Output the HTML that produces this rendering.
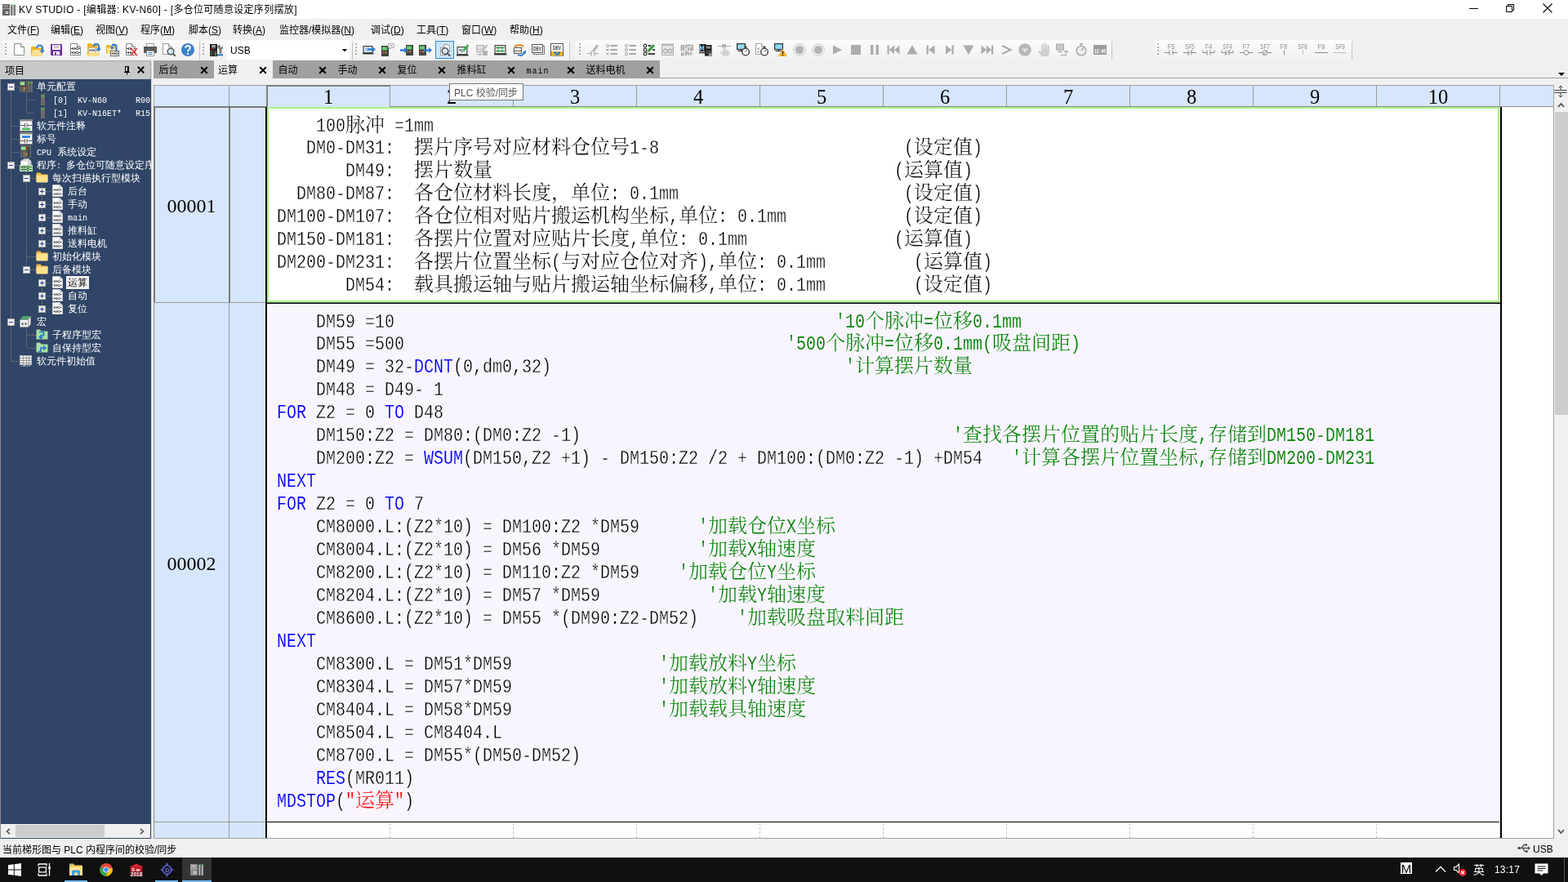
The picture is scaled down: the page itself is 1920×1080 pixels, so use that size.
<!DOCTYPE html>
<html lang="zh-CN"><head><meta charset="utf-8"><title>KV STUDIO</title>
<style>
*{box-sizing:border-box;margin:0;padding:0}
html,body{width:1920px;height:1080px;overflow:hidden;background:#f0f0f0}
body{position:relative;font-family:"Liberation Sans","Noto Sans CJK SC",sans-serif;font-size:12px;color:#000}
.abs,.abs>*{position:absolute}
#root{position:absolute;left:0;top:0;width:1920px;height:1080px;overflow:hidden;will-change:transform}
#root div,#root span.p,#root svg{position:absolute}
/* title */
#title{left:0;top:0;width:1920px;height:23px;background:#fff}
#title .t{left:23px;top:3px;height:18px;line-height:18px;font-size:12px;white-space:pre;letter-spacing:.32px}
/* menu */
#menu{left:0;top:23px;width:1920px;height:24px;background:#f0f0f0}
#menu .m{top:5px;height:18px;line-height:18px;font-size:12px;white-space:pre}
/* toolbar */
#tb{left:0;top:47px;width:1920px;height:28px;background:#f0f0f0}
.tg{top:2px;height:24px;border-radius:3px;background:linear-gradient(#fbfbfb,#f1f1f1)}
.grip{top:4px;width:2px;height:16px;background:repeating-linear-gradient(#b0b0b0 0 2px,transparent 2px 4px)}
/* left panel */
#lp-h{left:0;top:74px;width:185px;height:23px;background:#c8c8c8;border-top:1px solid #aaa;border-right:1px solid #a4a4a4}
#lp{left:0;top:97px;width:185px;height:930px;background:#304567;border-left:1px solid #8a8a8a}
#lp .r{left:0;height:16px;line-height:16px;color:#fff;font-family:"Liberation Mono","WenQuanYi Zen Hei","Noto Sans CJK SC",sans-serif;font-size:12px;white-space:pre}
#lp .r b{font-weight:normal;font-size:10px;letter-spacing:0}
/* tabs */
.tab{top:74px;height:22px;background:#a0a0a0;line-height:25px;font-size:12px;padding-left:6.500px;white-space:pre}
.tab.on{background:#f0f0f0;top:75px;height:22px;line-height:23px;padding-left:5px}
.tx{top:81px;width:9px;height:9px}
/* grid */
#hdr{left:188px;top:104px;width:1715px;height:27px;background:#d6e6fd;border:1px solid #a0a0a0;border-bottom:1px solid #8c8c8c}
.hc{top:105px;height:25px;border-left:1px solid #9a9a9a;text-align:center;font:24.5px/27px "Liberation Serif",serif}
#rowh{left:188px;top:131px;width:138px;height:896px;background:#d6e6fd;border-left:1px solid #8c8c8c;border-bottom:1px solid #a0a0a0}
.rn{left:189px;width:91px;text-align:center;font:24px/28px "Liberation Serif",serif;height:28px}
/* code */
#b1{left:327px;top:131px;width:1509px;height:239px;background:#fff;border:2px solid #a8f283}
#b2{left:327px;top:372px;width:1509px;height:634px;background:#f9f5ff}
.ln{left:339px;height:28px;line-height:28px;white-space:pre;font-family:"Liberation Mono","Noto Serif CJK SC",serif;font-size:24px;color:#000}
.ln span{position:static;display:inline-block;vertical-align:baseline;line-height:28px;white-space:pre}
.ln .l{font-family:"Liberation Mono",monospace;font-size:24px;transform:scaleX(.8333);transform-origin:0 50%;overflow:visible}
.ln .c{font-family:"Liberation Mono","Noto Serif CJK SC",serif;font-size:24px}
.ln .l{-webkit-text-stroke:0.35px #fbf9ff}
.ln .l.g,.ln .l.k,.ln .l.s{-webkit-text-stroke:0.12px #fbf9ff}
.ln .c{-webkit-text-stroke:0.2px #fbf9ff}
.ln .c.g,.ln .c.s{-webkit-text-stroke:0.15px #fbf9ff}
.ln .k{color:#0000ff}.ln .g{color:#008000}.ln .s{color:#ff0000}
/* status */
#status{left:0;top:1027px;width:1920px;height:23px;background:#f0f0f0}
/* taskbar */
#task{left:0;top:1050px;width:1920px;height:30px;background:#101010}
</style></head><body><div id="root">

<div id="title"><span class="p t">KV STUDIO - [编辑器: KV-N60] - [多仓位可随意设定序列摆放]</span>
<svg style="left:3px;top:5px" width="16" height="14" viewBox="0 0 16 14" ><rect x="0" y="0" width="9" height="14" fill="#666"/><rect x="1" y="1" width="6" height="3" fill="#8a8a8a"/><path d="M0 5.500H9" stroke="#bbb" stroke-width=".8"/><rect x="4" y="9" width="3" height="3" fill="#e4e4e4"/><rect x="5" y="10" width="1" height="1" fill="#444"/><rect x="10" y="1" width="2.500" height="13" fill="#777"/><rect x="13.500" y="1" width="2.500" height="13" fill="#777"/><rect x="11.500" y="0" width="1.200" height="1.200" fill="#2f6"/><rect x="14.500" y="0" width="1.200" height="1.200" fill="#2f6"/></svg>
<svg style="left:1799px;top:10px" width="11" height="1" viewBox="0 0 11 1" ><rect width="11" height="1" fill="#000"/></svg>
<svg style="left:1843px;top:4px" width="12" height="12" viewBox="0 0 12 12" ><path d="M1.500 3.500H8.500V10.500H1.500ZM3.500 3.500V1.500H10.500V8.500H8.500" fill="none" stroke="#000" stroke-width="1"/></svg>
<svg style="left:1889px;top:4px" width="12" height="12" viewBox="0 0 12 12" ><path d="M0.500 0.500L11.500 11.500M11.500 0.500L0.500 11.500" stroke="#000" stroke-width="1.100"/></svg>
</div>

<div id="menu">
<span class="p m" style="left:9px">文件(<u>F</u>)</span>
<span class="p m" style="left:62px">编辑(<u>E</u>)</span>
<span class="p m" style="left:117px">视图(<u>V</u>)</span>
<span class="p m" style="left:172px">程序(<u>M</u>)</span>
<span class="p m" style="left:231px">脚本(<u>S</u>)</span>
<span class="p m" style="left:285px">转换(<u>A</u>)</span>
<span class="p m" style="left:342px">监控器/模拟器(<u>N</u>)</span>
<span class="p m" style="left:454px">调试(<u>D</u>)</span>
<span class="p m" style="left:510px">工具(<u>T</u>)</span>
<span class="p m" style="left:565px">窗口(<u>W</u>)</span>
<span class="p m" style="left:624px">帮助(<u>H</u>)</span>
</div>

<div id="tb">
<div class="tg" style="left:3px;width:241px"></div>
<div class="tg" style="left:246px;width:185px"></div>
<div class="tg" style="left:433px;width:264px"></div>
<div class="tg" style="left:704px;width:657px"></div>
<div class="tg" style="left:1414px;width:241px"></div>
<div style="left:244px;top:4px;width:1px;height:22px;background:#c4c4c4"></div>
<div style="left:431px;top:4px;width:1px;height:22px;background:#c4c4c4"></div>
<div style="left:697px;top:4px;width:1px;height:22px;background:#c4c4c4"></div>
<div style="left:1361px;top:4px;width:1px;height:22px;background:#c4c4c4"></div>
<div style="left:1655px;top:4px;width:1px;height:22px;background:#c4c4c4"></div>
<div class="grip" style="left:6px;top:6px"></div>
<div class="grip" style="left:248px;top:6px"></div>
<div class="grip" style="left:435px;top:6px"></div>
<div class="grip" style="left:709px;top:6px"></div>
<div class="grip" style="left:1417px;top:6px"></div>
<svg style="left:15px;top:6px" width="16" height="16" viewBox="0 0 16 16" ><path d="M2.5 0.5H10.5L14.5 4.5V14.5H2.5Z" fill="#fff" stroke="#8a8a8a"/><path d="M10.5 0.5V4.5H14.5" fill="#e8e8e8" stroke="#8a8a8a"/></svg>
<svg style="left:38px;top:6px" width="16" height="16" viewBox="0 0 16 16" ><path d="M0 5Q0 4 1 4H5L6.5 6H13V16H0Z" fill="#f0b323"/><path d="M2 8H16L13.5 16H0Z" fill="#ffdf90"/><path d="M7 6A3.5 3.5 0 0 1 14 6V9" stroke="#2f7cd0" stroke-width="2.2" fill="none"/><path d="M10.5 8.5H16.5L13.5 12.5Z" fill="#2f7cd0"/></svg>
<svg style="left:61px;top:6px" width="16" height="16" viewBox="0 0 16 16" ><path d="M1 1H15V15H2L1 14Z" fill="#7030a0"/><rect x="3" y="2" width="10" height="6" fill="#fff"/><path d="M5 3.500H11M5 5.500H11" stroke="#a0a0a0"/><rect x="4" y="10" width="8" height="4.300" fill="#fff"/><rect x="6" y="11" width="2" height="3.300" fill="#7030a0"/></svg>
<svg style="left:84px;top:6px" width="16" height="16" viewBox="0 0 16 16" ><path d="M2.5 0.5H10.5L14.5 4.5V14.5H2.5Z" fill="#fff" stroke="#8a8a8a"/><path d="M10.5 0.5V4.5H14.5" fill="#e8e8e8" stroke="#8a8a8a"/><path d="M3 6.5H5.5M7.5 6.5H9M12 6.5H14M5.5 5V8M7.5 5V8M3 11.5H5.5M7.5 11.5H9M12 11.5H14M5.5 10V13M7.5 10V13" stroke="#444" fill="none"/><circle cx="10.5" cy="6.5" r="1.4" fill="#fff" stroke="#444"/><circle cx="10.5" cy="11.5" r="1.4" fill="#fff" stroke="#444"/></svg>
<svg style="left:107px;top:6px" width="16" height="16" viewBox="0 0 16 16" ><path d="M0 1Q0 0 1 0H5L6.5 2H12V15H0Z" fill="#f0b323"/><rect x="1.5" y="5.5" width="12" height="6" fill="#fff" stroke="#aaa" stroke-width=".6"/><path d="M2 8.5H4M4 7V10M6 7V10M6 8.5H8M11 8.5H13" stroke="#555"/><circle cx="9.5" cy="8.5" r="1.4" fill="none" stroke="#555"/><path d="M2 11H16L13.5 16H0Z" fill="#ffdf90"/><path d="M7.5 3.5A3.3 3.3 0 0 1 14 3.5V7" stroke="#2f7cd0" stroke-width="2.2" fill="none"/><path d="M11 6H17L14 10Z" fill="#2f7cd0"/></svg>
<svg style="left:130px;top:6px" width="16" height="16" viewBox="0 0 16 16" ><path d="M0 3Q0 2 1 2H4L5.5 3.5H11V13H0Z" fill="#f0b323"/><path d="M1 5H11V13H1Z" fill="#ffdf90"/><path d="M12.5 9V3.5A3 3 0 0 0 7 3.5" stroke="#2f7cd0" stroke-width="2.2" fill="none"/><path d="M4.5 4.5H10.5L7.5 7.8Z" fill="#2f7cd0" transform="rotate(25 7.5 5)"/><rect x="5.5" y="9.5" width="10" height="6" fill="#fff" stroke="#666"/><path d="M6.5 12.5H8M8 11V14M10 11V14M10 12.5H11M14 12.5H15" stroke="#444"/><circle cx="12.5" cy="12.5" r="1.3" fill="none" stroke="#444"/></svg>
<svg style="left:153px;top:6px" width="16" height="16" viewBox="0 0 16 16" ><path d="M1.5 0.5H8.5L12.5 4.5V14.5H1.5Z" fill="#fff" stroke="#8a8a8a"/><path d="M8.5 0.5V4.5H12.5" fill="#e8e8e8" stroke="#8a8a8a"/><path d="M2 6.5H4.5M6.5 6.5H9M4.5 5V8M6.5 5V8M2 11.5H4.5M6.5 11.5H9M4.5 10V13M6.5 10V13M10.5 6.5H12.5" stroke="#444" fill="none"/><path d="M7 6L15 15M15 6L7 15" stroke="#e0323c" stroke-width="1.6"/></svg>
<svg style="left:176px;top:6px" width="16" height="16" viewBox="0 0 16 16" ><rect x="3.5" y="0.5" width="9" height="5" fill="#fff" stroke="#9a9a9a"/><path d="M0 4H16V12H0Z" fill="#5a5a5a"/><rect x="3.5" y="9.5" width="9" height="6" fill="#fff" stroke="#9a9a9a"/><path d="M5.5 11.5H10.5M5.5 13.5H10.5" stroke="#2f7cd0" stroke-width="1.2"/></svg>
<svg style="left:199px;top:6px" width="16" height="16" viewBox="0 0 16 16" ><path d="M0.5 0.5H7.5L11.5 4.5V13.5H0.5Z" fill="#fff" stroke="#9a9a9a"/><path d="M7.5 0.5V4.5H11.5" fill="#e8e8e8" stroke="#9a9a9a"/><circle cx="10" cy="10" r="3.8" fill="#cfeaf8" stroke="#555" stroke-width="1.5"/><path d="M12.8 12.8L15.8 15.8" stroke="#444" stroke-width="1.8"/></svg>
<svg style="left:222px;top:6px" width="16" height="16" viewBox="0 0 16 16" ><circle cx="8" cy="8" r="8" fill="#3b82c8"/><path d="M5.2 5.8Q5.3 3 8 3Q10.8 3 10.8 5.6Q10.8 7 9.2 8Q8 8.8 8 10.3" stroke="#fff" stroke-width="1.9" fill="none"/><rect x="7" y="11.8" width="2" height="2" fill="#fff"/></svg>
<svg style="left:257px;top:6px" width="16" height="16" viewBox="0 0 16 16" ><rect x="0" y="1" width="9" height="15" fill="#111"/><rect x="2" y="2" width="5" height="3.500" fill="#9c9c9c"/><rect x="1" y="6" width="1.600" height="1.600" fill="#f01818"/><rect x="3.500" y="6.300" width="3" height="1" fill="#777"/><rect x="0.500" y="8.500" width="2.500" height="7" fill="#4c4c4c"/><rect x="3.800" y="8.500" width="1.200" height="7" fill="#4c4c4c"/><rect x="5.800" y="8.500" width="2.700" height="7" fill="#4c4c4c"/><rect x="6" y="11.800" width="1.800" height="1.400" fill="#1fd41f"/><rect x="6" y="13.800" width="1.800" height="1.400" fill="#1fd41f"/><path d="M9 4L11.500 1.500L13 3V5L14.500 5L16 3Q17 6 14.500 7.500V12.500H11.500V7.500Q9.500 6.500 9 4Z" fill="#7c7c7c"/><rect x="9" y="13.300" width="7" height="2" fill="#2a72c8"/></svg>
<div style="left:278px;top:3px;width:150px;height:23px;background:#fff"></div>
<span class="p" style="left:282px;top:7px;line-height:17px;font-size:12px">USB</span>
<svg style="left:418.5px;top:12.5px" width="6" height="3.5" viewBox="0 0 6 3.5" ><path d="M0 0H6L3 3.500Z" fill="#000"/></svg>
<svg style="left:444px;top:6px" width="16" height="16" viewBox="0 0 16 16" ><rect x="1.1" y="3.6" width="10.8" height="8" fill="#e8f4fb" stroke="#444" stroke-width="1.2"/><path d="M-0.5 12.6H13.5" stroke="#333" stroke-width="1.6"/><path d="M4 5.5V9.5M6 5.5V9.5" stroke="#3a7ab8" stroke-dasharray="1.5 1"/><path d="M6 6.2H12V4.1L16 7.5L12 10.9V8.8H6Z" fill="#2f7cd0"/></svg>
<svg style="left:467px;top:6px" width="16" height="16" viewBox="0 0 16 16" ><rect x="0" y="3" width="9" height="13" fill="#444"/><rect x="1" y="4.5" width="6" height="4" fill="#62d26c"/><rect x="1.5" y="10.5" width="1.6" height="1.6" fill="#e55"/><rect x="4.5" y="10.5" width="1.6" height="1.6" fill="#fa0"/><path d="M8.5 0.5H15.5V5.5H12L10.5 7.5V5.5H8.5Z" fill="#fff" stroke="#aaa"/><path d="M10 2.5H14M10 4H14" stroke="#999" stroke-width=".7"/></svg>
<svg style="left:490px;top:6px" width="16" height="16" viewBox="0 0 16 16" ><rect x="7" y="2" width="9" height="13" fill="#444"/><rect x="8" y="3.5" width="6" height="4" fill="#62d26c"/><rect x="8.5" y="9.5" width="1.6" height="1.6" fill="#e55"/><rect x="11.5" y="9.5" width="1.6" height="1.6" fill="#fa0"/><path d="M0 7.2H5V5.1L9 8.5L5 11.9V9.8H0Z" fill="#2f7cd0"/></svg>
<svg style="left:513px;top:6px" width="16" height="16" viewBox="0 0 16 16" ><rect x="0" y="2" width="9" height="13" fill="#444"/><rect x="1" y="3.5" width="6" height="4" fill="#62d26c"/><rect x="1.5" y="9.5" width="1.6" height="1.6" fill="#e55"/><rect x="4.5" y="9.5" width="1.6" height="1.6" fill="#fa0"/><path d="M6 7.2H12V5.1L16 8.5L12 11.9V9.8H6Z" fill="#2f7cd0"/></svg>
<div style="left:533px;top:3px;width:23px;height:22px;background:#cce4f7;border:1px solid #2a8ad4"></div>
<svg style="left:536px;top:6px" width="16" height="16" viewBox="0 0 16 16" ><rect x="3.5" y="5.5" width="7" height="9" fill="#fff" stroke="#9a9a9a"/><path d="M7.500 1.500H12L14.500 4V10.500H7.500Z" fill="#fff" stroke="#9a9a9a"/><circle cx="9" cy="9.500" r="3.800" fill="#d6eefa" stroke="#555" stroke-width="1.500"/><path d="M11.800 12.300L15.300 15.800" stroke="#444" stroke-width="1.800"/></svg>
<svg style="left:559px;top:6px" width="16" height="16" viewBox="0 0 16 16" ><rect x="1.1" y="4.6" width="11.8" height="9" fill="#e8f4fb" stroke="#444" stroke-width="1.2"/><path d="M-0.5 14.6H14.5" stroke="#333" stroke-width="1.6"/><path d="M3 8.5H5M5 7V10M7 7V10" stroke="#555"/><path d="M6.5 11L7.5 8L13.5 1L15.500 3L9.500 10Z" fill="#3fae49"/><path d="M6.500 11L7.500 8L9.500 10Z" fill="#f2d6a0"/><path d="M6.3 11.200L7 9.800L7.800 10.700Z" fill="#222"/></svg>
<svg style="left:582px;top:6px" width="16" height="16" viewBox="0 0 16 16" ><rect x="1.5" y="2.500" width="9" height="8" fill="#e0e0e0" stroke="#b0b0b0"/><path d="M2 7.500H5M7 6V9" stroke="#b0b0b0"/><path d="M8 8L14 1.500L15.500 3L10 9.500Z" fill="#b8b8b8"/><rect x="9" y="9" width="6" height="6" fill="#b4b4b4"/><path d="M1 13.500H7M5 11.500L7.500 13.500L5 15.500" stroke="#c0c0c0" stroke-width="1.300" fill="none"/></svg>
<svg style="left:605px;top:6px" width="16" height="16" viewBox="0 0 16 16" ><rect x="1.1" y="2.6" width="12.8" height="10" fill="#fff" stroke="#444" stroke-width="1.2"/><path d="M-0.5 13.6H15.5" stroke="#333" stroke-width="1.6"/><path d="M2.500 5.500H12.500M2.500 9.500H12.500" stroke="#444"/><rect x="4" y="4" width="2.200" height="3" fill="#3fc050"/><rect x="8.500" y="4" width="2.200" height="3" fill="#3fc050"/><rect x="4" y="8" width="2.200" height="3" fill="#3fc050"/><rect x="8.500" y="8" width="2.200" height="3" fill="#3fc050"/></svg>
<svg style="left:628px;top:6px" width="16" height="16" viewBox="0 0 16 16" ><rect x="1.5" y="5.500" width="9" height="7" fill="#fff" stroke="#555"/><path d="M2 9.500H4M4 8V11M6 8V11M6 9.500H7.500M8.500 8V11M8.500 9.500H10" stroke="#555" stroke-width=".8"/><path d="M4 4A5 4 0 0 1 13 4.500" stroke="#f08a24" stroke-width="1.800" fill="none"/><path d="M1.500 2L6 2.500L3 6Z" fill="#f08a24"/><path d="M14 10A5 4.500 0 0 1 6 14" stroke="#2f7cd0" stroke-width="1.800" fill="none"/><path d="M16 8.500L15.500 13L11.500 11Z" fill="#2f7cd0"/></svg>
<svg style="left:651px;top:6px" width="16" height="16" viewBox="0 0 16 16" ><rect x="2.500" y="3.500" width="13" height="10" fill="#fff" stroke="#777"/><rect x="0.5" y="1.500" width="13" height="10" fill="#fff" stroke="#555"/><text x="2" y="9" font-family="Liberation Sans,sans-serif" font-weight="bold" font-size="6.500" fill="#333" textLength="10" lengthAdjust="spacingAndGlyphs">DEV</text></svg>
<svg style="left:674px;top:6px" width="16" height="16" viewBox="0 0 16 16" ><rect x="0.5" y="0.500" width="15" height="14.500" fill="#fff" stroke="#555"/><text x="3" y="8" font-family="Liberation Sans,sans-serif" font-weight="bold" font-size="6.500" fill="#333" textLength="10" lengthAdjust="spacingAndGlyphs">DEV</text><rect x="1" y="10" width="14" height="5" fill="#f2b824"/><path d="M4 11.500H7V13.500H10V11.500H12" stroke="#2f7cd0" stroke-width="2" fill="none"/></svg>
<svg style="left:718px;top:6px" width="16" height="16" viewBox="0 0 16 16" ><path d="M1 12.500H6M10 12.500H15M6 9.5V15.5M10 9.5V15.5" stroke="#a8a8a8" stroke-width="1.200"/><path d="M7 9L12.500 1.500L15 3.500L9.500 10.500Z" fill="#b4b4b4"/><path d="M7 9L9.500 10.500L6.500 11.500Z" fill="#d8d8d8"/></svg>
<svg style="left:741px;top:6px" width="16" height="16" viewBox="0 0 16 16" ><circle cx="3" cy="3" r="1.700" fill="none" stroke="#a8a8a8"/><path d="M6.500 3H15M1 8H4.500M6.500 8H15M6.500 13H15" stroke="#a8a8a8" stroke-width="1.800"/><path d="M1.500 11.500L4.500 14.500M4.500 11.500L1.500 14.500" stroke="#a8a8a8"/></svg>
<svg style="left:764px;top:6px" width="16" height="16" viewBox="0 0 16 16" ><circle cx="3" cy="3" r="1.700" fill="none" stroke="#a8a8a8"/><circle cx="3" cy="8" r="1.700" fill="none" stroke="#a8a8a8"/><circle cx="3" cy="13" r="1.700" fill="none" stroke="#a8a8a8"/><path d="M6.500 3H15M6.500 8H15M6.500 13H15" stroke="#a8a8a8" stroke-width="1.800"/></svg>
<svg style="left:787px;top:6px" width="16" height="16" viewBox="0 0 16 16" ><circle cx="3" cy="3" r="1.800" fill="none" stroke="#333" stroke-width="1.200"/><circle cx="3" cy="8" r="1.800" fill="none" stroke="#333" stroke-width="1.200"/><circle cx="3" cy="13" r="1.800" fill="none" stroke="#333" stroke-width="1.200"/><path d="M6.500 3H10M12 8H15M6.500 13H15" stroke="#444" stroke-width="1.800"/><path d="M4.500 11.500L5.500 9L12.500 1L15 3L8 10.800Z" fill="#2fa23a"/><path d="M4.500 11.500L5.500 9L8 10.800Z" fill="#f0c090"/><path d="M4.300 11.700L5 10.300L5.800 11.200Z" fill="#222"/></svg>
<svg style="left:810px;top:6px" width="16" height="16" viewBox="0 0 16 16" ><rect x="0.5" y="1" width="14" height="13.500" fill="#e6e6e6" stroke="#b0b0b0"/><rect x="0.5" y="1" width="14" height="2" fill="#b8b8b8"/><circle cx="4.500" cy="9.500" r="2.300" fill="none" stroke="#a8a8a8" stroke-width="1.200"/><circle cx="10.500" cy="9.500" r="2.300" fill="none" stroke="#a8a8a8" stroke-width="1.200"/><path d="M6.800 9.200Q7.500 8.500 8.200 9.200M2.500 8.500L5 6.500M12.500 8L15.500 5.500" stroke="#a8a8a8" fill="none"/></svg>
<svg style="left:833px;top:6px" width="16" height="16" viewBox="0 0 16 16" ><rect x="0.500" y="1.500" width="15" height="13" fill="#e4e4e4"/><path d="M1.500 2V9M4 2V9M1 12.500H4.500M1 14.500H4.500M7 2.500H13.500M7 2.500V6M10 5V9M13 5V9M7 9V14M7 11.500H10M10 11.500V14.500M13 11V14.500M6.500 14.500H8M15 2V9" stroke="#a4a4a4" stroke-width="1.700" fill="none"/></svg>
<svg style="left:856px;top:6px" width="16" height="16" viewBox="0 0 16 16" ><rect x="0.5" y="1" width="8" height="9" fill="#1d2c3c"/><path d="M1.500 9V3L3.500 7L5.500 3V9" stroke="#7fc8f0" stroke-width="1.100" fill="none"/><path d="M0 11.500H9" stroke="#222" stroke-width="1.400"/><rect x="7" y="2" width="8.500" height="13.500" fill="#1a1a1a"/><rect x="8.500" y="3.500" width="5.500" height="3" fill="#8a8a8a"/><path d="M8 9.500H15M8 11.500H15M11 12V15.500" stroke="#777" stroke-width=".8"/><rect x="12" y="12.500" width="3" height="2.500" fill="#aaa"/></svg>
<svg style="left:879px;top:6px" width="16" height="16" viewBox="0 0 16 16" ><path d="M0 3.500H16" stroke="#b4b4b4" stroke-width="1.200"/><rect x="5" y="1" width="5" height="4" fill="#b4b4b4"/><path d="M6.500 5V10.500L3.500 9.500Q2.500 10 3.500 11.500L7 15.500H12.500Q14.500 14 14.500 11Q14 8.500 9.500 8V5Z" fill="#d2d2d2"/></svg>
<svg style="left:902px;top:6px" width="16" height="16" viewBox="0 0 16 16" ><rect x="0.6" y="0.6" width="9.8" height="7" fill="#8fd8f4" stroke="#333" stroke-width="1.200"/><path d="M5.5 7.6V9.5M1.5 9.5H9.5" stroke="#333" stroke-width="1.200"/><circle cx="11" cy="10.5" r="4.3" fill="#fff" stroke="#333" stroke-width="1.300"/><path d="M11 6.2V4.4M9.5 4.4H12.5" stroke="#333" stroke-width="1.200"/><path d="M11 10.5L12.6 8.3" stroke="#333"/></svg>
<svg style="left:925px;top:6px" width="16" height="16" viewBox="0 0 16 16" ><path d="M0.500 0.500H7.500L11.500 4.500V13.500H0.500Z" fill="#fff" stroke="#a0a0a0"/><path d="M7.500 0.500V4.500H11.500" fill="#e8e8e8" stroke="#a0a0a0"/><path d="M2 6.500H4M4 5V8M2 10.500H4M4 9V12" stroke="#999"/><circle cx="11" cy="10.5" r="4.3" fill="#fff" stroke="#333" stroke-width="1.300"/><path d="M11 6.2V4.4M9.5 4.4H12.5" stroke="#333" stroke-width="1.200"/><path d="M11 10.5L12.6 8.3" stroke="#333"/></svg>
<svg style="left:948px;top:6px" width="16" height="16" viewBox="0 0 16 16" ><rect x="0.6" y="0.6" width="9.8" height="7" fill="#8fd8f4" stroke="#333" stroke-width="1.200"/><path d="M5.5 7.6V9.5M1.5 9.5H9.5" stroke="#333" stroke-width="1.200"/><path d="M10.500 6.500L16 16H5Z" fill="#f2b02c"/><path d="M10.500 10V13" stroke="#222" stroke-width="1.300"/><rect x="9.850" y="13.800" width="1.300" height="1.300" fill="#222"/></svg>
<svg style="left:971px;top:6px" width="16" height="16" viewBox="0 0 16 16" ><circle cx="8" cy="8" r="7.300" fill="#f4f4f4" stroke="#c6c6c6" stroke-width="1"/><circle cx="8" cy="8" r="5.200" fill="#b4b4b4"/></svg>
<svg style="left:994px;top:6px" width="16" height="16" viewBox="0 0 16 16" ><circle cx="8" cy="8" r="7.300" fill="#f4f4f4" stroke="#c6c6c6" stroke-width="1"/><circle cx="8" cy="8" r="5.200" fill="#b4b4b4"/></svg>
<svg style="left:1017px;top:6px" width="16" height="16" viewBox="0 0 16 16" ><path d="M3 2.500L14 8L3 13.500Z" fill="#acacac"/></svg>
<svg style="left:1040px;top:6px" width="16" height="16" viewBox="0 0 16 16" ><rect x="2" y="2" width="12" height="12" fill="#acacac"/></svg>
<svg style="left:1063px;top:6px" width="16" height="16" viewBox="0 0 16 16" ><rect x="3" y="2" width="3.500" height="12" fill="#acacac"/><rect x="9.500" y="2" width="3.500" height="12" fill="#acacac"/></svg>
<svg style="left:1086px;top:6px" width="16" height="16" viewBox="0 0 16 16" ><rect x="0.5" y="2.500" width="2.200" height="11" fill="#acacac"/><path d="M9 2.500V13.500L2.700 8ZM15.500 2.500V13.500L9.200 8Z" fill="#acacac"/></svg>
<svg style="left:1109px;top:6px" width="16" height="16" viewBox="0 0 16 16" ><path d="M8 2L14.500 13.500H1.500Z" fill="#acacac"/></svg>
<svg style="left:1132px;top:6px" width="16" height="16" viewBox="0 0 16 16" ><rect x="2.500" y="2.500" width="2.300" height="11" fill="#acacac"/><path d="M12.500 2.500V13.500L5 8Z" fill="#acacac"/></svg>
<svg style="left:1155px;top:6px" width="16" height="16" viewBox="0 0 16 16" ><rect x="10.500" y="2.500" width="2.300" height="11" fill="#acacac"/><path d="M3 2.500V13.500L10.500 8Z" fill="#acacac"/></svg>
<svg style="left:1178px;top:6px" width="16" height="16" viewBox="0 0 16 16" ><path d="M8 14L14.500 2.500H1.500Z" fill="#acacac"/></svg>
<svg style="left:1201px;top:6px" width="16" height="16" viewBox="0 0 16 16" ><rect x="13" y="2.500" width="2.200" height="11" fill="#acacac"/><path d="M0.500 2.500V13.500L6.800 8ZM6.800 2.500V13.500L13 8Z" fill="#acacac"/></svg>
<svg style="left:1224px;top:6px" width="16" height="16" viewBox="0 0 16 16" ><path d="M3 3L13.500 8L3 13" stroke="#acacac" stroke-width="2.200" fill="none"/></svg>
<svg style="left:1247px;top:6px" width="16" height="16" viewBox="0 0 16 16" ><circle cx="8" cy="8" r="7.800" fill="#b8b8b8"/><path d="M4 6.500H12L8 11.500Z" fill="#e4e4e4"/></svg>
<svg style="left:1270px;top:6px" width="16" height="16" viewBox="0 0 16 16" ><path d="M4.500 15.500L1 10.500Q0.500 9 2 9.200L4 11V3Q5 2 5.800 3V7.500H6.300V1.500Q7.300 0.500 8.200 1.500V7.500H8.700V2Q9.700 1 10.600 2V7.800H11.100V3.500Q12 2.600 13 3.500V11Q13 14 11.500 15.500Z" fill="#cfcfcf" transform="translate(0.5 -1) scale(1.1)"/></svg>
<svg style="left:1293px;top:6px" width="16" height="16" viewBox="0 0 16 16" ><rect x="0.500" y="1" width="9" height="7" fill="#c8c8c8" stroke="#acacac"/><path d="M5 8.500V10.500M2 10.500H8" stroke="#acacac" stroke-width="1.200"/><path d="M7 13.500H14M11.500 10L14 8L16.500 10M14 8.500V13.500" stroke="#acacac" stroke-width="1.200" fill="none" transform="translate(-1.500 1)"/></svg>
<svg style="left:1316px;top:6px" width="16" height="16" viewBox="0 0 16 16" ><circle cx="8" cy="9" r="5.800" fill="#eee" stroke="#acacac" stroke-width="1.600"/><path d="M8 1V3M6 0.800H10M8 9L10.500 5.500" stroke="#acacac" stroke-width="1.400"/></svg>
<svg style="left:1339px;top:6px" width="16" height="16" viewBox="0 0 16 16" ><rect x="0" y="2" width="16" height="12" fill="#9c9c9c"/><text x="1" y="11.500" font-family="Liberation Mono,monospace" font-size="8" font-weight="bold" fill="#fff" textLength="14" lengthAdjust="spacingAndGlyphs">12:00</text></svg>
<svg style="left:1426px;top:5px" width="16" height="17" viewBox="0 0 16 17" ><text x="3.75" y="7.800" font-family="Liberation Sans,sans-serif" font-size="8.6" fill="#8c8c8c" textLength="8.5" lengthAdjust="spacingAndGlyphs">F5</text><path d="M0 12.500H6M10 12.500H16M6 9.5V15.5M10 9.5V15.5" stroke="#8c8c8c"/></svg>
<svg style="left:1449px;top:5px" width="16" height="17" viewBox="0 0 16 17" ><text x="2.25" y="7.800" font-family="Liberation Sans,sans-serif" font-size="8.6" fill="#8c8c8c" textLength="11.5" lengthAdjust="spacingAndGlyphs">SF5</text><path d="M0 12.500H6M10 12.500H16M6 9.5V15.5M10 9.5V15.5M5 15.5L11 9.5" stroke="#8c8c8c"/></svg>
<svg style="left:1472px;top:5px" width="16" height="17" viewBox="0 0 16 17" ><text x="3.75" y="7.800" font-family="Liberation Sans,sans-serif" font-size="8.6" fill="#8c8c8c" textLength="8.5" lengthAdjust="spacingAndGlyphs">F4</text><path d="M1 9.5V12.500H6M10 12.500H15V9.5M6 9.5V15.5M10 9.5V15.5" stroke="#8c8c8c" fill="none"/></svg>
<svg style="left:1495px;top:5px" width="16" height="17" viewBox="0 0 16 17" ><text x="2.25" y="7.800" font-family="Liberation Sans,sans-serif" font-size="8.6" fill="#8c8c8c" textLength="11.5" lengthAdjust="spacingAndGlyphs">SF4</text><path d="M1 9.5V12.500H6M10 12.500H15V9.5M6 9.5V15.5M10 9.5V15.5M5 15.5L11 9.5" stroke="#8c8c8c" fill="none"/></svg>
<svg style="left:1518px;top:5px" width="16" height="17" viewBox="0 0 16 17" ><text x="3.75" y="7.800" font-family="Liberation Sans,sans-serif" font-size="8.6" fill="#8c8c8c" textLength="8.5" lengthAdjust="spacingAndGlyphs">F7</text><path d="M0 12.500H5M11 12.500H16" stroke="#8c8c8c"/><circle cx="8" cy="12.500" r="2.800" fill="none" stroke="#8c8c8c"/></svg>
<svg style="left:1541px;top:5px" width="16" height="17" viewBox="0 0 16 17" ><text x="2.25" y="7.800" font-family="Liberation Sans,sans-serif" font-size="8.6" fill="#8c8c8c" textLength="11.5" lengthAdjust="spacingAndGlyphs">SF7</text><path d="M0 12.500H5M11 12.500H16M5.500 15.500L10.500 9.500" stroke="#8c8c8c"/><circle cx="8" cy="12.500" r="2.800" fill="none" stroke="#8c8c8c"/></svg>
<svg style="left:1564px;top:5px" width="16" height="17" viewBox="0 0 16 17" ><text x="3.75" y="7.800" font-family="Liberation Sans,sans-serif" font-size="8.6" fill="#8c8c8c" textLength="8.5" lengthAdjust="spacingAndGlyphs">F8</text><path d="M8.500 9.5V15.500" stroke="#8c8c8c"/></svg>
<svg style="left:1587px;top:5px" width="16" height="17" viewBox="0 0 16 17" ><text x="2.25" y="7.800" font-family="Liberation Sans,sans-serif" font-size="8.6" fill="#8c8c8c" textLength="11.5" lengthAdjust="spacingAndGlyphs">SF8</text><path d="M8.500 9.5V15.500" stroke="#8c8c8c" stroke-dasharray="1 1"/></svg>
<svg style="left:1610px;top:5px" width="16" height="17" viewBox="0 0 16 17" ><text x="3.75" y="7.800" font-family="Liberation Sans,sans-serif" font-size="8.6" fill="#8c8c8c" textLength="8.5" lengthAdjust="spacingAndGlyphs">F9</text><path d="M0 12.500H16" stroke="#8c8c8c"/></svg>
<svg style="left:1633px;top:5px" width="16" height="17" viewBox="0 0 16 17" ><text x="2.25" y="7.800" font-family="Liberation Sans,sans-serif" font-size="8.6" fill="#8c8c8c" textLength="11.5" lengthAdjust="spacingAndGlyphs">SF9</text><path d="M0 12.500H16" stroke="#8c8c8c" stroke-dasharray="1 1"/></svg>
</div>

<!-- left panel -->
<div id="lp-h"><span class="p" style="left:6px;top:4px;line-height:17px;font-size:12px">项目</span>
<svg style="left:152px;top:6px" width="8" height="11" viewBox="0 0 8 11" ><rect x="1.500" y="0.500" width="4" height="6" fill="none" stroke="#000"/><rect x="4" y="0.500" width="2" height="6" fill="#000"/><path d="M0 7.500H7M3.500 7.500V10.500" stroke="#000" stroke-width="1"/></svg>
<svg style="left:168px;top:6px" width="9" height="9" viewBox="0 0 9 9" ><path d="M0.800 0.800L8.200 8.200M8.200 0.800L0.800 8.200" stroke="#000" stroke-width="2"/></svg>
</div>
<div id="lp">
<div style="left:12px;top:14px;width:1px;height:331px;background:repeating-linear-gradient(#807e74 0 1px,transparent 1px 2px)"></div>
<div style="left:31px;top:17px;width:1px;height:24px;background:repeating-linear-gradient(#807e74 0 1px,transparent 1px 2px)"></div>
<div style="left:31px;top:113px;width:1px;height:120px;background:repeating-linear-gradient(#807e74 0 1px,transparent 1px 2px)"></div>
<div style="left:50px;top:129px;width:1px;height:72px;background:repeating-linear-gradient(#807e74 0 1px,transparent 1px 2px)"></div>
<div style="left:50px;top:241px;width:1px;height:40px;background:repeating-linear-gradient(#807e74 0 1px,transparent 1px 2px)"></div>
<div style="left:31px;top:305px;width:1px;height:24px;background:repeating-linear-gradient(#807e74 0 1px,transparent 1px 2px)"></div>
<div style="left:13px;top:9px;width:10px;height:1px;background:repeating-linear-gradient(90deg,#807e74 0 1px,transparent 1px 2px)"></div>
<svg style="left:8px;top:5px" width="9" height="9" viewBox="0 0 9 9" ><rect x="0.5" y="0.5" width="8" height="8" fill="#f4f4f4" stroke="#a8a8a8"/><path d="M2 4.5H7" stroke="#2a3f8f"/></svg>
<svg style="left:23px;top:1px" width="16" height="16" viewBox="0 0 16 16" ><rect x="0" y="1" width="16" height="14" fill="#454545"/><rect x="0" y="1" width="7" height="14" fill="#6a6a6a"/><rect x="1" y="2.500" width="5" height="3.500" fill="#8fec8f"/><path d="M0 7.500H7M2.700 8V15" stroke="#454545"/><rect x="3.800" y="9.500" width="1.300" height="1.300" fill="#f26a10"/><rect x="5.600" y="9.500" width="1.300" height="1.300" fill="#f4d010"/><rect x="8" y="1" width="1.200" height="14" fill="#6a6a6a"/><rect x="10" y="1" width="2.600" height="14" fill="#6a6a6a"/><rect x="13.300" y="1" width="2.700" height="14" fill="#6a6a6a"/><rect x="10.200" y="3" width="2.200" height="1.200" fill="#2fe43a"/><rect x="13.500" y="3" width="2.200" height="1.200" fill="#2fe43a"/></svg>
<div class="r" style="left:44px;top:2px;">单元配置</div>
<div style="left:32px;top:25px;width:10px;height:1px;background:repeating-linear-gradient(90deg,#807e74 0 1px,transparent 1px 2px)"></div>
<svg style="left:49px;top:18px" width="5" height="14" viewBox="0 0 5 14" ><rect x="0" y="0" width="5" height="14" fill="#6a6a6a"/><rect x="0.800" y="2" width="3.400" height="1.200" fill="#2fe43a"/></svg>
<div class="r" style="left:64px;top:18px;"><b>[0]  KV-N60</b></div>
<div style="left:32px;top:41px;width:10px;height:1px;background:repeating-linear-gradient(90deg,#807e74 0 1px,transparent 1px 2px)"></div>
<svg style="left:49px;top:34px" width="5" height="14" viewBox="0 0 5 14" ><rect x="0" y="0" width="5" height="14" fill="#6a6a6a"/><rect x="0.800" y="2" width="3.400" height="1.200" fill="#2fe43a"/></svg>
<div class="r" style="left:64px;top:34px;"><b>[1]  KV-N16ET*</b></div>
<div style="left:13px;top:57px;width:10px;height:1px;background:repeating-linear-gradient(90deg,#807e74 0 1px,transparent 1px 2px)"></div>
<svg style="left:23px;top:49px" width="16" height="15" viewBox="0 0 16 15" ><rect x="0" y="0" width="16" height="15" fill="#8a8a8a"/><rect x="1" y="2.500" width="14" height="11.500" fill="#fff"/><path d="M1 7.500H6.500M9 7.500H15M6.500 4.500V10M9 4.500V10" stroke="#5a5a5a" fill="none"/><rect x="3" y="10.500" width="10" height="3" fill="#4cc05a"/></svg>
<div class="r" style="left:44px;top:50px;">软元件注释</div>
<div style="left:13px;top:73px;width:10px;height:1px;background:repeating-linear-gradient(90deg,#807e74 0 1px,transparent 1px 2px)"></div>
<svg style="left:23px;top:65px" width="16" height="15" viewBox="0 0 16 15" ><rect x="0" y="0" width="16" height="15" fill="#8a8a8a"/><rect x="1" y="2.500" width="14" height="11.500" fill="#fff"/><rect x="3" y="4" width="10" height="3" fill="#3a86f0"/><path d="M1 10.500H6.500M9 10.500H15M6.500 8V13.500M9 8V13.500" stroke="#5a5a5a" fill="none"/></svg>
<div class="r" style="left:44px;top:66px;">标号</div>
<div style="left:13px;top:89px;width:10px;height:1px;background:repeating-linear-gradient(90deg,#807e74 0 1px,transparent 1px 2px)"></div>
<svg style="left:23px;top:81px" width="16" height="16" viewBox="0 0 16 16" ><rect x="1" y="0" width="13" height="15" fill="#6a6a6a"/><rect x="2" y="2" width="5" height="3.500" fill="#8fec8f"/><rect x="8" y="1" width="1.300" height="4.500" fill="#e0401c"/><path d="M1 6.500H9M3.500 7V15M9.500 0V15" stroke="#454545"/><rect x="6" y="10" width="1.300" height="1.300" fill="#f26a10"/><rect x="8" y="10" width="1.300" height="1.300" fill="#f4d010"/><rect x="10.800" y="2" width="1.500" height="12" fill="#2c2c2c"/></svg>
<div class="r" style="left:44px;top:82px;"><b>CPU</b> 系统设定</div>
<div style="left:13px;top:105px;width:10px;height:1px;background:repeating-linear-gradient(90deg,#807e74 0 1px,transparent 1px 2px)"></div>
<svg style="left:8px;top:101px" width="9" height="9" viewBox="0 0 9 9" ><rect x="0.5" y="0.5" width="8" height="8" fill="#f4f4f4" stroke="#a8a8a8"/><path d="M2 4.5H7" stroke="#2a3f8f"/></svg>
<svg style="left:23px;top:97px" width="16" height="16" viewBox="0 0 16 16" ><path d="M5.500 0.500H11L14 3.500V9H5.500Z" fill="#e4e4e4" stroke="#bbb"/><path d="M3.500 1.500H9L12 4.500V9H3.500Z" fill="#f0f0f0" stroke="#bbb"/><path d="M1.500 3H7.500L10.500 6V9H1.500Z" fill="#fff" stroke="#ccc"/><rect x="0" y="8" width="16" height="8" fill="#b6e6b2"/><path d="M1 10.500H4M6 10.500H8M12 10.500H15M4 9V12M6 9V12M1 13.500H4M6 13.500H8M12 13.500H15M4 12.500V15M6 12.500V15" stroke="#3a5a3a" fill="none"/><circle cx="10" cy="10.500" r="1.300" fill="none" stroke="#3a5a3a"/><circle cx="10" cy="13.500" r="1.300" fill="none" stroke="#3a5a3a"/></svg>
<div class="r" style="left:44px;top:98px;">程序<b>: </b>多仓位可随意设定序</div>
<div style="left:32px;top:121px;width:11px;height:1px;background:repeating-linear-gradient(90deg,#807e74 0 1px,transparent 1px 2px)"></div>
<svg style="left:27px;top:117px" width="9" height="9" viewBox="0 0 9 9" ><rect x="0.5" y="0.5" width="8" height="8" fill="#f4f4f4" stroke="#a8a8a8"/><path d="M2 4.5H7" stroke="#2a3f8f"/></svg>
<svg style="left:43px;top:113px" width="15" height="15" viewBox="0 0 15 15" ><path d="M0.5 2.5Q0.5 1.5 1.5 1.5H5.5L7 3.5H13.5Q14.5 3.5 14.5 4.5V12.5H0.5Z" fill="#f5b93a"/><path d="M0.5 4.5H14.5V12.5Q14.5 13.5 13.5 13.5H1.5Q0.5 13.5 0.5 12.5Z" fill="#ffe08c"/></svg>
<div class="r" style="left:63px;top:114px;">每次扫描执行型模块</div>
<div style="left:51px;top:137px;width:12px;height:1px;background:repeating-linear-gradient(90deg,#807e74 0 1px,transparent 1px 2px)"></div>
<svg style="left:46px;top:133px" width="9" height="9" viewBox="0 0 9 9" ><rect x="0.5" y="0.5" width="8" height="8" fill="#f4f4f4" stroke="#a8a8a8"/><path d="M2 4.5H7" stroke="#2a3f8f"/><path d="M4.5 2V7" stroke="#2a3f8f"/></svg>
<svg style="left:63px;top:129px" width="13" height="15" viewBox="0 0 13 15" ><path d="M0.500 0.500H9L12.500 4V14.500H0.500Z" fill="#fbfbfb" stroke="#cfcfcf"/><path d="M9 0.500V4H12.500" fill="#dcdcdc" stroke="#cfcfcf"/><path d="M1.500 6.5H3.500M3.500 5V8M5.500 5V8M5.500 6.5H7M9.500 6.5H11.500" stroke="#555" fill="none"/><circle cx="8.300" cy="6.5" r="1.200" fill="none" stroke="#555" stroke-width=".9"/><path d="M1.500 11.5H3.500M3.500 10V13M5.500 10V13M5.500 11.5H7M9.500 11.5H11.500" stroke="#555" fill="none"/><circle cx="8.300" cy="11.5" r="1.200" fill="none" stroke="#555" stroke-width=".9"/></svg>
<div class="r" style="left:82px;top:130px;">后台</div>
<div style="left:51px;top:153px;width:12px;height:1px;background:repeating-linear-gradient(90deg,#807e74 0 1px,transparent 1px 2px)"></div>
<svg style="left:46px;top:149px" width="9" height="9" viewBox="0 0 9 9" ><rect x="0.5" y="0.5" width="8" height="8" fill="#f4f4f4" stroke="#a8a8a8"/><path d="M2 4.5H7" stroke="#2a3f8f"/><path d="M4.5 2V7" stroke="#2a3f8f"/></svg>
<svg style="left:63px;top:145px" width="13" height="15" viewBox="0 0 13 15" ><path d="M0.500 0.500H9L12.500 4V14.500H0.500Z" fill="#fbfbfb" stroke="#cfcfcf"/><path d="M9 0.500V4H12.500" fill="#dcdcdc" stroke="#cfcfcf"/><path d="M1.500 6.5H3.500M3.500 5V8M5.500 5V8M5.500 6.5H7M9.500 6.5H11.500" stroke="#555" fill="none"/><circle cx="8.300" cy="6.5" r="1.200" fill="none" stroke="#555" stroke-width=".9"/><path d="M1.500 11.5H3.500M3.500 10V13M5.500 10V13M5.500 11.5H7M9.500 11.5H11.500" stroke="#555" fill="none"/><circle cx="8.300" cy="11.5" r="1.200" fill="none" stroke="#555" stroke-width=".9"/></svg>
<div class="r" style="left:82px;top:146px;">手动</div>
<div style="left:51px;top:169px;width:12px;height:1px;background:repeating-linear-gradient(90deg,#807e74 0 1px,transparent 1px 2px)"></div>
<svg style="left:46px;top:165px" width="9" height="9" viewBox="0 0 9 9" ><rect x="0.5" y="0.5" width="8" height="8" fill="#f4f4f4" stroke="#a8a8a8"/><path d="M2 4.5H7" stroke="#2a3f8f"/><path d="M4.5 2V7" stroke="#2a3f8f"/></svg>
<svg style="left:63px;top:161px" width="13" height="15" viewBox="0 0 13 15" ><path d="M0.500 0.500H9L12.500 4V14.500H0.500Z" fill="#fbfbfb" stroke="#cfcfcf"/><path d="M9 0.500V4H12.500" fill="#dcdcdc" stroke="#cfcfcf"/><path d="M1.500 6.5H3.500M3.500 5V8M5.500 5V8M5.500 6.5H7M9.500 6.5H11.500" stroke="#555" fill="none"/><circle cx="8.300" cy="6.5" r="1.200" fill="none" stroke="#555" stroke-width=".9"/><path d="M1.500 11.5H3.500M3.500 10V13M5.500 10V13M5.500 11.5H7M9.500 11.5H11.500" stroke="#555" fill="none"/><circle cx="8.300" cy="11.5" r="1.200" fill="none" stroke="#555" stroke-width=".9"/></svg>
<div class="r" style="left:82px;top:162px;"><b>main</b></div>
<div style="left:51px;top:185px;width:12px;height:1px;background:repeating-linear-gradient(90deg,#807e74 0 1px,transparent 1px 2px)"></div>
<svg style="left:46px;top:181px" width="9" height="9" viewBox="0 0 9 9" ><rect x="0.5" y="0.5" width="8" height="8" fill="#f4f4f4" stroke="#a8a8a8"/><path d="M2 4.5H7" stroke="#2a3f8f"/><path d="M4.5 2V7" stroke="#2a3f8f"/></svg>
<svg style="left:63px;top:177px" width="13" height="15" viewBox="0 0 13 15" ><path d="M0.500 0.500H9L12.500 4V14.500H0.500Z" fill="#fbfbfb" stroke="#cfcfcf"/><path d="M9 0.500V4H12.500" fill="#dcdcdc" stroke="#cfcfcf"/><path d="M1.500 6.5H3.500M3.500 5V8M5.500 5V8M5.500 6.5H7M9.500 6.5H11.500" stroke="#555" fill="none"/><circle cx="8.300" cy="6.5" r="1.200" fill="none" stroke="#555" stroke-width=".9"/><path d="M1.500 11.5H3.500M3.500 10V13M5.500 10V13M5.500 11.5H7M9.500 11.5H11.500" stroke="#555" fill="none"/><circle cx="8.300" cy="11.5" r="1.200" fill="none" stroke="#555" stroke-width=".9"/></svg>
<div class="r" style="left:82px;top:178px;">推料缸</div>
<div style="left:51px;top:201px;width:12px;height:1px;background:repeating-linear-gradient(90deg,#807e74 0 1px,transparent 1px 2px)"></div>
<svg style="left:46px;top:197px" width="9" height="9" viewBox="0 0 9 9" ><rect x="0.5" y="0.5" width="8" height="8" fill="#f4f4f4" stroke="#a8a8a8"/><path d="M2 4.5H7" stroke="#2a3f8f"/><path d="M4.5 2V7" stroke="#2a3f8f"/></svg>
<svg style="left:63px;top:193px" width="13" height="15" viewBox="0 0 13 15" ><path d="M0.500 0.500H9L12.500 4V14.500H0.500Z" fill="#fbfbfb" stroke="#cfcfcf"/><path d="M9 0.500V4H12.500" fill="#dcdcdc" stroke="#cfcfcf"/><path d="M1.500 6.5H3.500M3.500 5V8M5.500 5V8M5.500 6.5H7M9.500 6.5H11.500" stroke="#555" fill="none"/><circle cx="8.300" cy="6.5" r="1.200" fill="none" stroke="#555" stroke-width=".9"/><path d="M1.500 11.5H3.500M3.500 10V13M5.500 10V13M5.500 11.5H7M9.500 11.5H11.500" stroke="#555" fill="none"/><circle cx="8.300" cy="11.5" r="1.200" fill="none" stroke="#555" stroke-width=".9"/></svg>
<div class="r" style="left:82px;top:194px;">送料电机</div>
<div style="left:32px;top:217px;width:11px;height:1px;background:repeating-linear-gradient(90deg,#807e74 0 1px,transparent 1px 2px)"></div>
<svg style="left:43px;top:209px" width="15" height="15" viewBox="0 0 15 15" ><path d="M0.5 2.5Q0.5 1.5 1.5 1.5H5.5L7 3.5H13.5Q14.5 3.5 14.5 4.5V12.5H0.5Z" fill="#f5b93a"/><path d="M0.5 4.5H14.5V12.5Q14.5 13.5 13.5 13.5H1.5Q0.5 13.5 0.5 12.5Z" fill="#ffe08c"/></svg>
<div class="r" style="left:63px;top:210px;">初始化模块</div>
<div style="left:32px;top:233px;width:11px;height:1px;background:repeating-linear-gradient(90deg,#807e74 0 1px,transparent 1px 2px)"></div>
<svg style="left:27px;top:229px" width="9" height="9" viewBox="0 0 9 9" ><rect x="0.5" y="0.5" width="8" height="8" fill="#f4f4f4" stroke="#a8a8a8"/><path d="M2 4.5H7" stroke="#2a3f8f"/></svg>
<svg style="left:43px;top:225px" width="15" height="15" viewBox="0 0 15 15" ><path d="M0.5 2.5Q0.5 1.5 1.5 1.5H5.5L7 3.5H13.5Q14.5 3.5 14.5 4.5V12.5H0.5Z" fill="#f5b93a"/><path d="M0.5 4.5H14.5V12.5Q14.5 13.5 13.5 13.5H1.5Q0.5 13.5 0.5 12.5Z" fill="#ffe08c"/></svg>
<div class="r" style="left:63px;top:226px;">后备模块</div>
<div style="left:51px;top:249px;width:12px;height:1px;background:repeating-linear-gradient(90deg,#807e74 0 1px,transparent 1px 2px)"></div>
<svg style="left:46px;top:245px" width="9" height="9" viewBox="0 0 9 9" ><rect x="0.5" y="0.5" width="8" height="8" fill="#f4f4f4" stroke="#a8a8a8"/><path d="M2 4.5H7" stroke="#2a3f8f"/><path d="M4.5 2V7" stroke="#2a3f8f"/></svg>
<svg style="left:63px;top:241px" width="13" height="15" viewBox="0 0 13 15" ><path d="M0.500 0.500H9L12.500 4V14.500H0.500Z" fill="#fbfbfb" stroke="#cfcfcf"/><path d="M9 0.500V4H12.500" fill="#dcdcdc" stroke="#cfcfcf"/><path d="M1.500 6.5H3.500M3.500 5V8M5.500 5V8M5.500 6.5H7M9.500 6.5H11.500" stroke="#555" fill="none"/><circle cx="8.300" cy="6.5" r="1.200" fill="none" stroke="#555" stroke-width=".9"/><path d="M1.500 11.5H3.500M3.500 10V13M5.500 10V13M5.500 11.5H7M9.500 11.5H11.500" stroke="#555" fill="none"/><circle cx="8.300" cy="11.5" r="1.200" fill="none" stroke="#555" stroke-width=".9"/></svg>
<div style="left:80px;top:241px;width:28px;height:16px;background:#f0f0f0"></div>
<div class="r" style="left:82px;top:242px;color:#000">运算</div>
<div style="left:51px;top:265px;width:12px;height:1px;background:repeating-linear-gradient(90deg,#807e74 0 1px,transparent 1px 2px)"></div>
<svg style="left:46px;top:261px" width="9" height="9" viewBox="0 0 9 9" ><rect x="0.5" y="0.5" width="8" height="8" fill="#f4f4f4" stroke="#a8a8a8"/><path d="M2 4.5H7" stroke="#2a3f8f"/><path d="M4.5 2V7" stroke="#2a3f8f"/></svg>
<svg style="left:63px;top:257px" width="13" height="15" viewBox="0 0 13 15" ><path d="M0.500 0.500H9L12.500 4V14.500H0.500Z" fill="#fbfbfb" stroke="#cfcfcf"/><path d="M9 0.500V4H12.500" fill="#dcdcdc" stroke="#cfcfcf"/><path d="M1.500 6.5H3.500M3.500 5V8M5.500 5V8M5.500 6.5H7M9.500 6.5H11.500" stroke="#555" fill="none"/><circle cx="8.300" cy="6.5" r="1.200" fill="none" stroke="#555" stroke-width=".9"/><path d="M1.500 11.5H3.500M3.500 10V13M5.500 10V13M5.500 11.5H7M9.500 11.5H11.500" stroke="#555" fill="none"/><circle cx="8.300" cy="11.5" r="1.200" fill="none" stroke="#555" stroke-width=".9"/></svg>
<div class="r" style="left:82px;top:258px;">自动</div>
<div style="left:51px;top:281px;width:12px;height:1px;background:repeating-linear-gradient(90deg,#807e74 0 1px,transparent 1px 2px)"></div>
<svg style="left:46px;top:277px" width="9" height="9" viewBox="0 0 9 9" ><rect x="0.5" y="0.5" width="8" height="8" fill="#f4f4f4" stroke="#a8a8a8"/><path d="M2 4.5H7" stroke="#2a3f8f"/><path d="M4.5 2V7" stroke="#2a3f8f"/></svg>
<svg style="left:63px;top:273px" width="13" height="15" viewBox="0 0 13 15" ><path d="M0.500 0.500H9L12.500 4V14.500H0.500Z" fill="#fbfbfb" stroke="#cfcfcf"/><path d="M9 0.500V4H12.500" fill="#dcdcdc" stroke="#cfcfcf"/><path d="M1.500 6.5H3.500M3.500 5V8M5.500 5V8M5.500 6.5H7M9.500 6.5H11.500" stroke="#555" fill="none"/><circle cx="8.300" cy="6.5" r="1.200" fill="none" stroke="#555" stroke-width=".9"/><path d="M1.500 11.5H3.500M3.500 10V13M5.500 10V13M5.500 11.5H7M9.500 11.5H11.500" stroke="#555" fill="none"/><circle cx="8.300" cy="11.5" r="1.200" fill="none" stroke="#555" stroke-width=".9"/></svg>
<div class="r" style="left:82px;top:274px;">复位</div>
<div style="left:13px;top:297px;width:10px;height:1px;background:repeating-linear-gradient(90deg,#807e74 0 1px,transparent 1px 2px)"></div>
<svg style="left:8px;top:293px" width="9" height="9" viewBox="0 0 9 9" ><rect x="0.5" y="0.5" width="8" height="8" fill="#f4f4f4" stroke="#a8a8a8"/><path d="M2 4.5H7" stroke="#2a3f8f"/></svg>
<svg style="left:23px;top:289px" width="15" height="16" viewBox="0 0 15 16" ><path d="M1 5L4 1H13L10 5Z" fill="#4aa86a"/><path d="M10.5 5L13.5 1.5V11L10.5 14.5Z" fill="#e8e8e8" stroke="#999"/><rect x="0.5" y="5.5" width="10" height="9" fill="#fafafa" stroke="#999"/><path d="M2 10.5H4M7 10.5H9M4 8.5V12.5M7 8.5V12.5" stroke="#444" fill="none"/></svg>
<div class="r" style="left:44px;top:290px;">宏</div>
<div style="left:32px;top:313px;width:11px;height:1px;background:repeating-linear-gradient(90deg,#807e74 0 1px,transparent 1px 2px)"></div>
<svg style="left:43px;top:305px" width="15" height="15" viewBox="0 0 15 15" ><path d="M0.5 2.5Q0.5 1.5 1.5 1.5H5L6.5 3.5H13.5Q14.5 3.5 14.5 4.5V13.5H0.5Z" fill="#a9dfa0"/><path d="M4 4.5H9.5V8.5H6V12M3.5 10L6 12.5L8.5 10" stroke="#2a76c8" stroke-width="1.6" fill="none"/></svg>
<div class="r" style="left:63px;top:306px;">子程序型宏</div>
<div style="left:32px;top:329px;width:11px;height:1px;background:repeating-linear-gradient(90deg,#807e74 0 1px,transparent 1px 2px)"></div>
<svg style="left:43px;top:321px" width="15" height="15" viewBox="0 0 15 15" ><path d="M0.5 2.5Q0.5 1.5 1.5 1.5H5L6.5 3.5H13.5Q14.5 3.5 14.5 4.5V13.5H0.5Z" fill="#a9dfa0"/><path d="M3 12.5H6V8H11.5M9 5.5L11.8 8L9 10.5" stroke="#2a76c8" stroke-width="1.6" fill="none"/></svg>
<div class="r" style="left:63px;top:322px;">自保持型宏</div>
<div style="left:13px;top:345px;width:10px;height:1px;background:repeating-linear-gradient(90deg,#807e74 0 1px,transparent 1px 2px)"></div>
<svg style="left:23px;top:338px" width="15" height="15" viewBox="0 0 15 15" ><rect x="0.5" y="0.5" width="14" height="11" fill="#eee" stroke="#bbb"/><path d="M0.5 3.5H14.5M0.5 6.5H14.5M0.5 9.5H14.5M4.5 0.5V11.5M8.5 0.5V11.5M11.5 0.5V11.5" stroke="#999" fill="none"/><path d="M2 13.5H3M5 12V14M7 12V14M9 13.5H10M12 12V14" stroke="#ddd" fill="none"/></svg>
<div class="r" style="left:44px;top:338px;">软元件初始值</div>
<div class="r" style="left:165px;top:18px;"><b>R00</b></div>
<div class="r" style="left:165px;top:34px;"><b>R15</b></div>
<div style="left:0px;top:912px;width:183px;height:17px;background:#f0f0f0"></div>
<div style="left:18px;top:913px;width:109px;height:15px;background:#cdcdcd"></div>
<svg style="left:6px;top:917px" width="6" height="8" viewBox="0 0 6 8" ><path d="M5 0.8L1.5 4L5 7.2" stroke="#555" stroke-width="1.6" fill="none"/></svg>
<svg style="left:170px;top:917px" width="6" height="8" viewBox="0 0 6 8" ><path d="M1 0.8L4.5 4L1 7.2" stroke="#555" stroke-width="1.6" fill="none"/></svg>
</div>
<div style="left:185px;top:75px;width:1px;height:952px;background:#dcdcdc"></div>

<!-- tabs -->
<div style="left:188px;top:95px;width:1732px;height:1px;background:#a0a0a0"></div>
<div class="tab" style="left:188px;width:74px">后台</div>
<svg style="left:244.5px;top:80.5px" width="10" height="10" viewBox="0 0 10 10" ><path d="M1.200 1.200L8.800 8.800M8.800 1.200L1.200 8.800" stroke="#000" stroke-width="2" fill="none"/></svg>
<div class="tab on" style="left:262px;width:72px">运算</div>
<svg style="left:316.5px;top:80.5px" width="10" height="10" viewBox="0 0 10 10" ><path d="M1.200 1.200L8.800 8.800M8.800 1.200L1.200 8.800" stroke="#000" stroke-width="2" fill="none"/></svg>
<div class="tab" style="left:334px;width:73px">自动</div>
<svg style="left:389.5px;top:80.5px" width="10" height="10" viewBox="0 0 10 10" ><path d="M1.200 1.200L8.800 8.800M8.800 1.200L1.200 8.800" stroke="#000" stroke-width="2" fill="none"/></svg>
<div class="tab" style="left:407px;width:73px">手动</div>
<svg style="left:462.5px;top:80.5px" width="10" height="10" viewBox="0 0 10 10" ><path d="M1.200 1.200L8.800 8.800M8.800 1.200L1.200 8.800" stroke="#000" stroke-width="2" fill="none"/></svg>
<div class="tab" style="left:480px;width:73px">复位</div>
<svg style="left:535.5px;top:80.5px" width="10" height="10" viewBox="0 0 10 10" ><path d="M1.200 1.200L8.800 8.800M8.800 1.200L1.200 8.800" stroke="#000" stroke-width="2" fill="none"/></svg>
<div class="tab" style="left:553px;width:85px">推料缸</div>
<svg style="left:620.5px;top:80.5px" width="10" height="10" viewBox="0 0 10 10" ><path d="M1.200 1.200L8.800 8.800M8.800 1.200L1.200 8.800" stroke="#000" stroke-width="2" fill="none"/></svg>
<div class="tab" style="left:638px;width:73px"><span style="position:static;font-family:'Liberation Mono',monospace;font-size:10px;letter-spacing:1px">main</span></div>
<svg style="left:693.5px;top:80.5px" width="10" height="10" viewBox="0 0 10 10" ><path d="M1.200 1.200L8.800 8.800M8.800 1.200L1.200 8.800" stroke="#000" stroke-width="2" fill="none"/></svg>
<div class="tab" style="left:711px;width:97px">送料电机</div>
<svg style="left:790.5px;top:80.5px" width="10" height="10" viewBox="0 0 10 10" ><path d="M1.200 1.200L8.800 8.800M8.800 1.200L1.200 8.800" stroke="#000" stroke-width="2" fill="none"/></svg>

<!-- grid -->
<div id="hdr"></div>
<div id="rowh"></div>
<div class="hc" style="left:326px;width:151px">1</div>
<div class="hc" style="left:477px;width:151px">2</div>
<div class="hc" style="left:628px;width:151px">3</div>
<div class="hc" style="left:779px;width:151px">4</div>
<div class="hc" style="left:930px;width:151px">5</div>
<div class="hc" style="left:1081px;width:151px">6</div>
<div class="hc" style="left:1232px;width:151px">7</div>
<div class="hc" style="left:1383px;width:151px">8</div>
<div class="hc" style="left:1534px;width:151px">9</div>
<div class="hc" style="left:1685px;width:151px">10</div>
<div class="hc" style="left:1836px;width:66px"></div>
<div style="left:280px;top:105px;width:1px;height:922px;background:#9a9a9a"></div>
<div style="left:326px;top:104px;width:152px;height:2px;background:#808080"></div>
<div style="left:326px;top:104px;width:2px;height:27px;background:#808080"></div>
<div style="left:328px;top:130px;width:149px;height:1px;background:#d6e6fd"></div>
<div style="left:188px;top:130px;width:139px;height:2px;background:#7a7a7a"></div>
<div style="left:188px;top:370px;width:139px;height:1px;background:#9a9a9a"></div>
<div style="left:188px;top:1006px;width:139px;height:1px;background:#9a9a9a"></div>
<div style="left:280px;top:131px;width:2px;height:239px;background:#7a7a7a"></div>
<div style="left:188px;top:131px;width:2px;height:239px;background:#7a7a7a"></div>
<div class="rn" style="top:238px">00001</div>
<div class="rn" style="top:676px">00002</div>
<div style="left:1838px;top:131px;width:64px;height:895px;background:#fff"></div>
<div style="left:1902px;top:104px;width:1px;height:923px;background:#a0a0a0"></div>
<div style="left:327px;top:1007px;width:1509px;height:19px;background:#fff"></div>
<div style="left:477px;top:1008px;width:1px;height:18px;background:repeating-linear-gradient(#c8c8c8 0 3px,transparent 3px 5px)"></div>
<div style="left:628px;top:1008px;width:1px;height:18px;background:repeating-linear-gradient(#c8c8c8 0 3px,transparent 3px 5px)"></div>
<div style="left:779px;top:1008px;width:1px;height:18px;background:repeating-linear-gradient(#c8c8c8 0 3px,transparent 3px 5px)"></div>
<div style="left:930px;top:1008px;width:1px;height:18px;background:repeating-linear-gradient(#c8c8c8 0 3px,transparent 3px 5px)"></div>
<div style="left:1081px;top:1008px;width:1px;height:18px;background:repeating-linear-gradient(#c8c8c8 0 3px,transparent 3px 5px)"></div>
<div style="left:1232px;top:1008px;width:1px;height:18px;background:repeating-linear-gradient(#c8c8c8 0 3px,transparent 3px 5px)"></div>
<div style="left:1383px;top:1008px;width:1px;height:18px;background:repeating-linear-gradient(#c8c8c8 0 3px,transparent 3px 5px)"></div>
<div style="left:1534px;top:1008px;width:1px;height:18px;background:repeating-linear-gradient(#c8c8c8 0 3px,transparent 3px 5px)"></div>
<div style="left:1685px;top:1008px;width:1px;height:18px;background:repeating-linear-gradient(#c8c8c8 0 3px,transparent 3px 5px)"></div>
<div style="left:188px;top:1026px;width:1715px;height:1px;background:#a0a0a0"></div>
<div id="b1"></div>
<div id="b2"></div>
<div class="ln" style="top:141px"><span class="l" style="width:84px">    100</span><span class="c">脉冲</span><span class="l" style="width:60px"> =1mm</span></div>
<div class="ln" style="top:168px"><span class="l" style="width:168px">   DM0-DM31:  </span><span class="c">摆片序号对应材料仓位号</span><span class="l" style="width:348px">1-8                         (</span><span class="c">设定值</span><span class="l" style="width:12px">)</span></div>
<div class="ln" style="top:196px"><span class="l" style="width:168px">       DM49:  </span><span class="c">摆片数量</span><span class="l" style="width:504px">                                         (</span><span class="c">运算值</span><span class="l" style="width:12px">)</span></div>
<div class="ln" style="top:224px"><span class="l" style="width:168px">  DM80-DM87:  </span><span class="c">各仓位材料长度，单位</span><span class="l" style="width:372px">: 0.1mm                       (</span><span class="c">设定值</span><span class="l" style="width:12px">)</span></div>
<div class="ln" style="top:252px"><span class="l" style="width:168px">DM100-DM107:  </span><span class="c">各仓位相对贴片搬运机构坐标</span><span class="l" style="width:12px">,</span><span class="c">单位</span><span class="l" style="width:240px">: 0.1mm            (</span><span class="c">设定值</span><span class="l" style="width:12px">)</span></div>
<div class="ln" style="top:280px"><span class="l" style="width:168px">DM150-DM181:  </span><span class="c">各摆片位置对应贴片长度</span><span class="l" style="width:12px">,</span><span class="c">单位</span><span class="l" style="width:276px">: 0.1mm               (</span><span class="c">运算值</span><span class="l" style="width:12px">)</span></div>
<div class="ln" style="top:308px"><span class="l" style="width:168px">DM200-DM231:  </span><span class="c">各摆片位置坐标</span><span class="l" style="width:12px">(</span><span class="c">与对应仓位对齐</span><span class="l" style="width:24px">),</span><span class="c">单位</span><span class="l" style="width:204px">: 0.1mm         (</span><span class="c">运算值</span><span class="l" style="width:12px">)</span></div>
<div class="ln" style="top:336px"><span class="l" style="width:168px">       DM54:  </span><span class="c">载具搬运轴与贴片搬运轴坐标偏移</span><span class="l" style="width:12px">,</span><span class="c">单位</span><span class="l" style="width:204px">: 0.1mm         (</span><span class="c">设定值</span><span class="l" style="width:12px">)</span></div>
<div class="ln" style="top:381px"><span class="l" style="width:684px">    DM59 =10                                             </span><span class="l g" style="width:36px">&#x27;10</span><span class="c g">个脉冲</span><span class="l g" style="width:12px">=</span><span class="c g">位移</span><span class="l g" style="width:60px">0.1mm</span></div>
<div class="ln" style="top:408px"><span class="l" style="width:624px">    DM55 =500                                       </span><span class="l g" style="width:48px">&#x27;500</span><span class="c g">个脉冲</span><span class="l g" style="width:12px">=</span><span class="c g">位移</span><span class="l g" style="width:72px">0.1mm(</span><span class="c g">吸盘间距</span><span class="l g" style="width:12px">)</span></div>
<div class="ln" style="top:436px"><span class="l" style="width:168px">    DM49 = 32-</span><span class="l k" style="width:48px">DCNT</span><span class="l" style="width:480px">(0,dm0,32)                              </span><span class="l g" style="width:12px">&#x27;</span><span class="c g">计算摆片数量</span></div>
<div class="ln" style="top:464px"><span class="l" style="width:204px">    DM48 = D49- 1</span></div>
<div class="ln" style="top:492px"><span class="l k" style="width:36px">FOR</span><span class="l" style="width:96px"> Z2 = 0 </span><span class="l k" style="width:24px">TO</span><span class="l" style="width:48px"> D48</span></div>
<div class="ln" style="top:520px"><span class="l" style="width:828px">    DM150:Z2 = DM80:(DM0:Z2 -1)                                      </span><span class="l g" style="width:12px">&#x27;</span><span class="c g">查找各摆片位置的贴片长度</span><span class="l g" style="width:12px">,</span><span class="c g">存储到</span><span class="l g" style="width:132px">DM150-DM181</span></div>
<div class="ln" style="top:548px"><span class="l" style="width:180px">    DM200:Z2 = </span><span class="l k" style="width:48px">WSUM</span><span class="l" style="width:672px">(DM150,Z2 +1) - DM150:Z2 /2 + DM100:(DM0:Z2 -1) +DM54   </span><span class="l g" style="width:12px">&#x27;</span><span class="c g">计算各摆片位置坐标</span><span class="l g" style="width:12px">,</span><span class="c g">存储到</span><span class="l g" style="width:132px">DM200-DM231</span></div>
<div class="ln" style="top:576px"><span class="l k" style="width:48px">NEXT</span></div>
<div class="ln" style="top:604px"><span class="l k" style="width:36px">FOR</span><span class="l" style="width:96px"> Z2 = 0 </span><span class="l k" style="width:24px">TO</span><span class="l" style="width:24px"> 7</span></div>
<div class="ln" style="top:632px"><span class="l" style="width:516px">    CM8000.L:(Z2*10) = DM100:Z2 *DM59      </span><span class="l g" style="width:12px">&#x27;</span><span class="c g">加载仓位</span><span class="l g" style="width:12px">X</span><span class="c g">坐标</span></div>
<div class="ln" style="top:660px"><span class="l" style="width:516px">    CM8004.L:(Z2*10) = DM56 *DM59          </span><span class="l g" style="width:12px">&#x27;</span><span class="c g">加载</span><span class="l g" style="width:12px">X</span><span class="c g">轴速度</span></div>
<div class="ln" style="top:688px"><span class="l" style="width:492px">    CM8200.L:(Z2*10) = DM110:Z2 *DM59    </span><span class="l g" style="width:12px">&#x27;</span><span class="c g">加载仓位</span><span class="l g" style="width:12px">Y</span><span class="c g">坐标</span></div>
<div class="ln" style="top:716px"><span class="l" style="width:528px">    CM8204.L:(Z2*10) = DM57 *DM59           </span><span class="l g" style="width:12px">&#x27;</span><span class="c g">加载</span><span class="l g" style="width:12px">Y</span><span class="c g">轴速度</span></div>
<div class="ln" style="top:744px"><span class="l" style="width:564px">    CM8600.L:(Z2*10) = DM55 *(DM90:Z2-DM52)    </span><span class="l g" style="width:12px">&#x27;</span><span class="c g">加载吸盘取料间距</span></div>
<div class="ln" style="top:772px"><span class="l k" style="width:48px">NEXT</span></div>
<div class="ln" style="top:800px"><span class="l" style="width:468px">    CM8300.L = DM51*DM59               </span><span class="l g" style="width:12px">&#x27;</span><span class="c g">加载放料</span><span class="l g" style="width:12px">Y</span><span class="c g">坐标</span></div>
<div class="ln" style="top:828px"><span class="l" style="width:468px">    CM8304.L = DM57*DM59               </span><span class="l g" style="width:12px">&#x27;</span><span class="c g">加载放料</span><span class="l g" style="width:12px">Y</span><span class="c g">轴速度</span></div>
<div class="ln" style="top:856px"><span class="l" style="width:468px">    CM8404.L = DM58*DM59               </span><span class="l g" style="width:12px">&#x27;</span><span class="c g">加载载具轴速度</span></div>
<div class="ln" style="top:884px"><span class="l" style="width:276px">    CM8504.L = CM8404.L</span></div>
<div class="ln" style="top:912px"><span class="l" style="width:372px">    CM8700.L = DM55*(DM50-DM52)</span></div>
<div class="ln" style="top:940px"><span class="l" style="width:48px">    </span><span class="l k" style="width:36px">RES</span><span class="l" style="width:84px">(MR011)</span></div>
<div class="ln" style="top:968px"><span class="l k" style="width:72px">MDSTOP</span><span class="l" style="width:12px">(</span><span class="l s" style="width:12px">&quot;</span><span class="c s">运算</span><span class="l s" style="width:12px">&quot;</span><span class="l" style="width:12px">)</span></div>
<div style="left:325px;top:131px;width:2px;height:895px;background:#000"></div>
<div style="left:1837px;top:131px;width:2px;height:895px;background:#000"></div>
<div style="left:327px;top:370px;width:1510px;height:1px;background:#6a6a6a"></div>
<div style="left:327px;top:371px;width:1510px;height:1px;background:#000"></div>
<div style="left:327px;top:1006px;width:1509px;height:1px;background:#000"></div>
<div style="left:550px;top:102px;width:91px;height:21px;background:#fff;border:1px solid #767676;color:#575757;font-size:12px;line-height:23px;padding-left:5px;white-space:pre">PLC 校验/同步</div>
<div style="left:1903px;top:96px;width:17px;height:931px;background:#f0f0f0"></div>
<div style="left:1904px;top:137px;width:16px;height:371px;background:#cdcdcd"></div>
<svg style="left:1903px;top:104px" width="16" height="16" viewBox="0 0 16 16" ><path d="M0.5 6.5H15.5M0.5 9.5H15.5" stroke="#444" stroke-width="1"/><path d="M8 1V6M8 10V15M5.5 3.5L8 1L10.5 3.5M5.5 12.5L8 15L10.5 12.5" stroke="#444" stroke-width="1" fill="none"/></svg>
<svg style="left:1907px;top:125px" width="9" height="7" viewBox="0 0 9 7" ><path d="M1 6L4.5 2L8 6" stroke="#505050" stroke-width="1.8" fill="none"/></svg>
<svg style="left:1907px;top:1015px" width="9" height="7" viewBox="0 0 9 7" ><path d="M1 1L4.5 5L8 1" stroke="#505050" stroke-width="1.8" fill="none"/></svg>
<svg style="left:1908px;top:89px" width="8" height="4" viewBox="0 0 8 4" ><path d="M0 0H8L4 4Z" fill="#000"/></svg>

<div id="status"><span class="p" style="left:3px;top:6px;line-height:17px;font-size:12px;white-space:pre">当前梯形图与 PLC 内程序间的校验/同步</span>
<svg style="left:1858px;top:5px" width="16" height="13" viewBox="0 0 16 13" ><path d="M1 6.500H13M5 6.500L8 2.500H10M6.500 6.500L9 10.500H11" stroke="#555" stroke-width="1.300" fill="none"/><path d="M13 4L16 6.500L13 9Z" fill="#555"/><circle cx="2" cy="6.500" r="1.800" fill="#555"/><rect x="9.500" y="1.300" width="2.500" height="2.500" fill="#555"/><circle cx="11.500" cy="10.500" r="1.500" fill="#555"/></svg>
<span class="p" style="left:1877px;top:5px;line-height:17px;font-size:12px">USB</span>
</div>
<div id="task">
<div style="left:223px;top:0;width:36px;height:30px;background:#343434"></div>
<div style="left:79px;top:28px;width:28px;height:2px;background:#76b9ed"></div>
<div style="left:190px;top:28px;width:28px;height:2px;background:#76b9ed"></div>
<div style="left:223px;top:28px;width:36px;height:2px;background:#76b9ed"></div>
<svg style="left:10px;top:7px" width="16" height="16" viewBox="0 0 16 16" ><path d="M0 2.300L6.800 1.300V7.500H0ZM7.800 1.150L16 0V7.500H7.800ZM0 8.500H6.800V14.700L0 13.700ZM7.800 8.500H16V16L7.800 14.850Z" fill="#fff"/></svg>
<svg style="left:46px;top:7px" width="17" height="16" viewBox="0 0 17 16" ><path d="M1 1V3.500M1 1H11V3.500M1 15V12.500M1 15H11V12.500" stroke="#fff" stroke-width="1.300" fill="none"/><rect x="1.600" y="5.100" width="8.800" height="5.800" fill="none" stroke="#fff" stroke-width="1.300"/><path d="M14.500 0V5M14.500 8V15.500" stroke="#fff" stroke-width="1.300"/><rect x="13.300" y="4.500" width="2.600" height="3" fill="#fff"/></svg>
<svg style="left:84px;top:7px" width="18" height="16" viewBox="0 0 18 16" ><path d="M1 1.500Q1 0.500 2 0.500H6L7.500 2.500H16Q17 2.500 17 3.500V15H1Z" fill="#f3c64a"/><path d="M1 4.500H17V15H1Z" fill="#ffe18f"/><rect x="2" y="1.300" width="3.500" height="1" fill="#59b7f0"/><path d="M4 15V10Q4 8.500 5.500 8.500H12.500Q14 8.500 14 10V15H11V11.500H7V15Z" fill="#3a9fe8"/></svg>
<svg style="left:122px;top:7px" width="16" height="16" viewBox="0 0 16 16" ><circle cx="8" cy="8" r="7.800" fill="#e8453c"/><path d="M8 8L1.200 4.200A7.800 7.800 0 0 0 7.200 15.760L11 9.700Z" fill="#33a852"/><path d="M8 8L15.400 5.500A7.800 7.800 0 0 1 7.200 15.760L11 9.500Z" fill="#fbbd05"/><path d="M1.200 4.200A7.800 7.800 0 0 1 15.400 5.500H8Z" fill="#e8453c"/><circle cx="8" cy="8" r="3.600" fill="#fff"/><circle cx="8" cy="8" r="2.800" fill="#4688f1"/></svg>
<svg style="left:159px;top:7px" width="17" height="17" viewBox="0 0 17 17" ><rect x="0.500" y="3" width="15" height="13" fill="#7a1418"/><path d="M1 4L8 0.500L15 4L8 5.500Z" fill="#d8262c"/><rect x="1" y="4" width="14" height="6" fill="#c41f26"/><text x="2" y="9.500" font-family="Liberation Sans,sans-serif" font-weight="bold" font-size="6" fill="#fff">S w</text><text x="0.800" y="16" font-family="Liberation Sans,sans-serif" font-weight="bold" font-size="7" fill="#fff" textLength="14.500" lengthAdjust="spacingAndGlyphs">2018</text></svg>
<svg style="left:196px;top:6px" width="17" height="18" viewBox="0 0 17 18" ><circle cx="8.500" cy="9" r="5.200" fill="none" stroke="#5d5fd0" stroke-width="1.600"/><path d="M8.500 0L10.300 3.500H6.700ZM8.500 18L10.300 14.500H6.700ZM0 9L3.500 7.200V10.800ZM17 9L13.500 7.200V10.800Z" fill="#5d5fd0"/><text x="6" y="12" font-family="Liberation Sans,sans-serif" font-weight="bold" font-size="8" fill="#6a6ce0">D</text></svg>
<svg style="left:233px;top:8px" width="16" height="14" viewBox="0 0 16 14" ><rect x="0" y="0" width="9" height="14" fill="#8c8c8c"/><rect x="1" y="1" width="6" height="3" fill="#b0b0b0"/><path d="M0 5.500H9" stroke="#bbb" stroke-width=".8"/><rect x="4" y="9" width="3" height="3" fill="#e4e4e4"/><rect x="5" y="10" width="1" height="1" fill="#444"/><rect x="10" y="1" width="2.500" height="13" fill="#a4a4a4"/><rect x="13.500" y="1" width="2.500" height="13" fill="#a4a4a4"/><rect x="11.500" y="0" width="1.200" height="1.200" fill="#2f6"/><rect x="14.500" y="0" width="1.200" height="1.200" fill="#2f6"/></svg>
<div style="left:1715px;top:6px;width:14px;height:14px;background:#fff;color:#000;font-size:15px;line-height:15px;text-align:center;font-family:'Liberation Sans',sans-serif">M</div>
<svg style="left:1757px;top:10px" width="14" height="8" viewBox="0 0 14 8" ><path d="M1 7.500L7 1.500L13 7.500" stroke="#fff" stroke-width="1.300" fill="none"/></svg>
<svg style="left:1779px;top:6px" width="18" height="17" viewBox="0 0 18 17" ><path d="M1.500 5.500H4L7.500 2V13L4 9.500H1.500Z" fill="none" stroke="#fff" stroke-width="1.100"/><circle cx="12" cy="12.500" r="4.600" fill="#e0202c"/><path d="M10.200 10.700L13.800 14.300M13.800 10.700L10.200 14.300" stroke="#fff" stroke-width="1.300"/></svg>
<span class="p" style="left:1804px;top:6px;color:#fff;font-size:14px;line-height:18px">英</span>
<span class="p" style="left:1830px;top:6px;color:#fff;font-size:12px;line-height:18px;letter-spacing:.2px">13:17</span>
<svg style="left:1879px;top:7px" width="17" height="17" viewBox="0 0 17 17" ><path d="M0.500 0.500H16.500V12.500H11L8.500 15L6 12.500H0.500Z" fill="#fff"/><path d="M3.500 4H13.500M3.500 6.500H13.500M3.500 9H10" stroke="#101010" stroke-width="1"/></svg>
<div style="left:1915px;top:0;width:1px;height:30px;background:#555"></div>
</div>
</div></body></html>
